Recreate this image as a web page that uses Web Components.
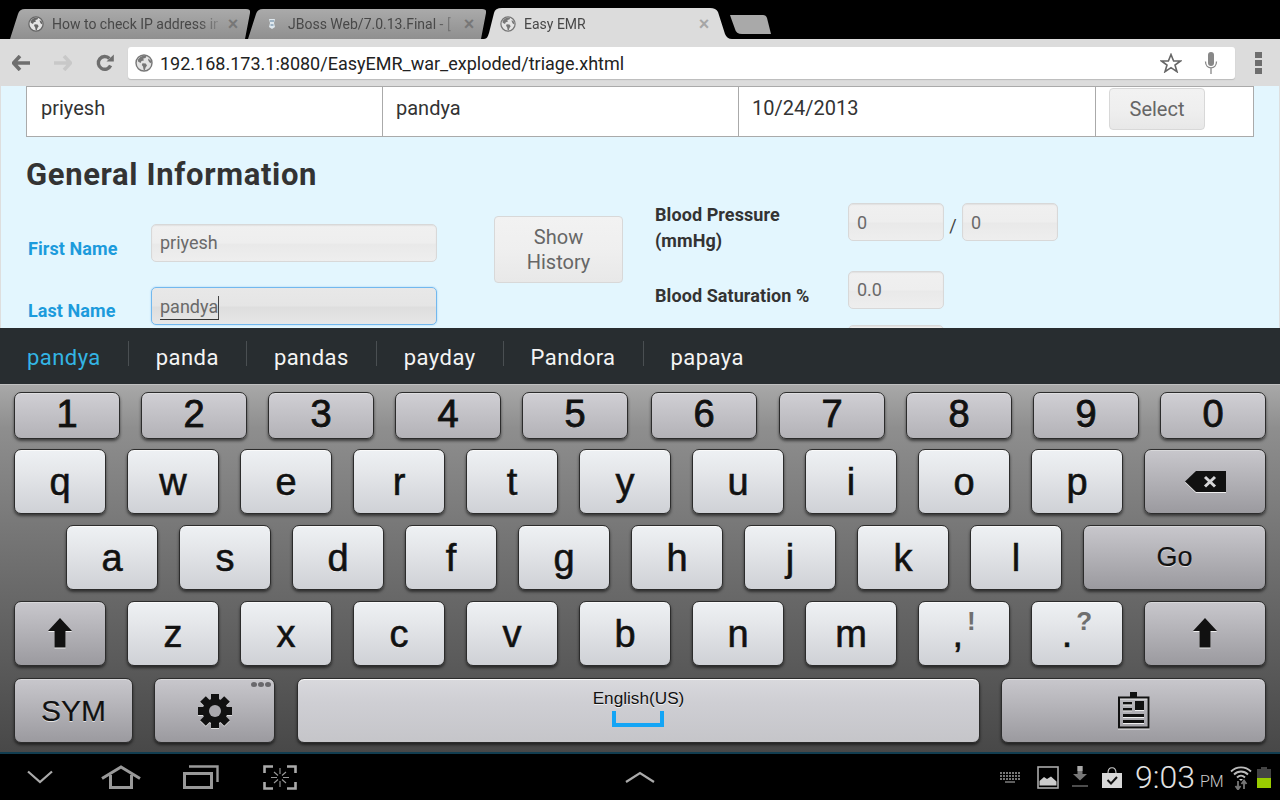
<!DOCTYPE html>
<html lang="en"><head><meta charset="utf-8"><title>Easy EMR</title>
<style>
html,body{margin:0;padding:0;background:#000;width:1280px;height:800px;overflow:hidden;font-family:Roboto,"Liberation Sans",sans-serif}
#app{display:flex;flex-direction:column;width:1280px;height:800px;overflow:hidden}
</style></head><body>
<div id="app">
<tab-strip></tab-strip>
<browser-toolbar url="192.168.173.1:8080/EasyEMR_war_exploded/triage.xhtml"></browser-toolbar>
<emr-page></emr-page>
<suggest-bar words="pandya,panda,pandas,payday,Pandora,papaya"></suggest-bar>
<soft-keyboard></soft-keyboard>
<system-bar></system-bar>
</div>
<script>
const GLOBE=(s,c='#777')=>`<svg width="${s}" height="${s}" viewBox="0 0 18 18" style="display:block;flex:none"><circle cx="9" cy="9" r="8" fill="#e4e4e4" stroke="${c}" stroke-width="1.4"/><path d="M3 5.5 5.5 2.7 9 1.6 11.5 2.2 10.5 4 8.3 4.6 8.8 6.5 6.5 7 5.6 9 3 7.5ZM7.5 9.3 10.7 9.6 12 11.5 10.6 13.5 9.8 16.3 8.6 15.8 8 12.6 6.8 11ZM13 4.5 15.8 6.5 16.4 9.5 14.6 8.6 13.4 6.8Z" fill="${c}"/></svg>`;
function def(name,css,render){
  customElements.define(name,class extends HTMLElement{
    connectedCallback(){
      if(this.shadowRoot)return;
      const r=this.attachShadow({mode:'open'});
      r.innerHTML=`<style>${css}</style>`+render(this);
    }
  });
}
def('browser-tab',`
:host{display:flex;align-items:center;position:relative;height:var(--h,30px);width:var(--w);margin-left:var(--ml,0);padding-left:var(--pl);padding-right:var(--pr);box-sizing:border-box;
 background:var(--bg);clip-path:var(--clip);color:#484848;font:14px Roboto,sans-serif;flex:none}
.ic{width:16px;flex:none;display:flex;justify-content:center}
.t{flex:1;margin-left:8px;white-space:nowrap;overflow:hidden;-webkit-mask-image:linear-gradient(90deg,#000 88%,rgba(0,0,0,.25));mask-image:linear-gradient(90deg,#000 88%,rgba(0,0,0,.25))}
.x{flex:none;width:14px;margin-left:8px;color:var(--xc,#777);font:bold 18px "Liberation Sans",sans-serif;text-align:center;line-height:30px}
`,h=>`<span class="ic"><slot name="icon"></slot></span><span class="t"><slot></slot></span><span class="x">×</span>`);
def('tab-strip',`
:host{display:flex;align-items:flex-end;height:39px;background:#000;padding-left:10px;box-sizing:border-box;flex:none}
.new{width:41px;height:19px;margin:0 0 5px -2px;background:#a9a9a9;flex:none;clip-path:path('M0 0H33Q36 0 37 3L41 19H12Q6 19 5 14L1 3Q0 0 0 0Z')}
`,h=>`
<browser-tab style="--w:240px;--pl:18px;--pr:10px;--bg:linear-gradient(#aaa,#8f8f8f);--clip:path('M0 30L8 5Q9.5 0 15 0H236Q241 0 240 4L235 30Z')"><span slot="icon">${GLOBE(16,'#666')}</span>How to check IP address in</browser-tab>
<browser-tab style="--w:238px;--ml:-2px;--pl:16px;--pr:10px;--bg:linear-gradient(#aaa,#8f8f8f);--clip:path('M0 30L8 5Q9.5 0 15 0H234Q239 0 238 4L233 30Z')"><svg slot="icon" width="8" height="12" viewBox="0 0 8 12" style="display:block"><path d="M1 1H7L6 5 7 9 4 11 1 9 2 5Z" fill="#dfe8ee"/><path d="M2 3H6M2.5 7H5.5" stroke="#5d7f9b"/></svg>JBoss Web/7.0.13.Final - [</browser-tab>
<browser-tab style="--w:248px;--h:31px;--ml:-2px;--pl:16px;--pr:21px;--bg:#dcdcdc;--xc:#a6a6a6;--clip:path('M0 31C3 31 4 28 5 25L10 5Q11 0 18 0H226Q232 0 234 4L241 26Q243 31 248 31Z')"><span slot="icon">${GLOBE(16,'#777')}</span>Easy EMR</browser-tab>
<div class="new"></div>`);
def('browser-toolbar',`
:host{display:flex;align-items:center;height:47px;background:#dcdcdc;flex:none;box-sizing:border-box;padding-left:12px;padding-top:1px}
svg{display:block;flex:none}
.omni{margin-left:14px;width:1107px;height:32px;background:#fff;border-radius:3px;box-shadow:0 1px 1px #bbb;display:flex;align-items:center;padding-left:7px;box-sizing:border-box;flex:none}
.u{margin-left:7px;font:18px Roboto,sans-serif;color:#222;flex:1;white-space:nowrap}
`,h=>`
<svg width="18" height="16" viewBox="0 0 18 16"><path d="M8 1 1.5 8 8 15M2 8H18" fill="none" stroke="#6e6e6e" stroke-width="3.6"/></svg>
<svg style="margin-left:24px" width="18" height="16" viewBox="0 0 18 16"><path d="M10 1 16.5 8 10 15M16 8H0" fill="none" stroke="#c8c8c8" stroke-width="3.6"/></svg>
<svg style="margin-left:24px" width="18" height="18" viewBox="0 0 18 18"><path d="M14.6 11.5A6.4 6.4 0 1 1 13.4 4.5" fill="none" stroke="#6e6e6e" stroke-width="3.4"/><path d="M10.5 7.5H17.8V0.5Z" fill="#6e6e6e"/></svg>
<div class="omni">${GLOBE(18,'#777')}<span class="u">${h.getAttribute('url')}</span>
<svg style="margin-right:22px" width="22" height="20" viewBox="0 0 22 20"><path d="M11 1.5 13.6 8H20.5L15 12 17 18.7 11 14.7 5 18.7 7 12 1.5 8H8.4Z" fill="none" stroke="#666" stroke-width="1.6"/></svg>
<svg style="margin-right:17px" width="14" height="24" viewBox="0 0 14 24"><rect x="4" y="1" width="6" height="14" rx="3" fill="#888"/><path d="M1.5 10.5C1.5 19 12.5 19 12.5 10.5M7 17V23" fill="none" stroke="#888" stroke-width="1.3"/></svg>
</div>
<svg style="margin-left:20px" width="7" height="22" viewBox="0 0 7 22"><rect y="0" width="7" height="6" fill="#6e6e6e"/><rect y="8" width="7" height="6" fill="#6e6e6e"/><rect y="16" width="7" height="6" fill="#6e6e6e"/></svg>`);
def('emr-button',`
:host{display:flex;align-items:center;justify-content:center;text-align:center;width:var(--w);height:var(--h);box-sizing:border-box;border:1px solid #d8d8d8;border-radius:4px;background:linear-gradient(#f2f2f2,#efefef 50%,#e8e8e8);color:#666;font:20px/25px Roboto,sans-serif}
`,h=>`<slot></slot>`);
def('patient-row',`
:host{display:grid;grid-template-columns:355px 356px 357px 1fr;height:51px;box-sizing:border-box;border:1px solid #aaa;background:#fff;flex:none;font:20px Roboto,sans-serif;color:#333;margin:0 25px}
.c{padding:9px 0 0 13px;border-left:1px solid #aaa;white-space:nowrap;line-height:24px}
.c.f{border-left:0;padding-left:14px}
.s{padding:1px 0 0 13px}
`,h=>`<div class="c f">priyesh</div><div class="c">pandya</div><div class="c">10/24/2013</div><div class="c s"><emr-button style="--w:96px;--h:42px">Select</emr-button></div>`);
def('emr-input',`
:host{display:block;flex:none;width:var(--w,96px);height:38px;box-sizing:border-box;border:1px solid #d8d8d8;border-radius:5px;padding:0 0 2px 8px;color:#6a6a6a;font:18px/36px Roboto,sans-serif;background:linear-gradient(#f0f0f0,#eeeeee 50%,#e9e9e9 53%,#eeeeee);white-space:nowrap;overflow:hidden;box-shadow:inset 0 1px 1px #e2e2e2}
:host([focused]){border-color:#72b8ee;box-shadow:0 0 2px #9ccdf2;background:linear-gradient(#e8e8e8,#e5e5e5 50%,#dedede 53%,#e6e6e6)}
.w{display:inline-block;position:relative}
:host([focused]) .w{border-right:1px solid #444;box-shadow:0 1px 0 #333;line-height:22px;height:23px;vertical-align:middle}
:host([nudge]) .w{top:1px}
`,h=>`<span class="w"><slot></slot></span>`);
def('emr-label',`
:host{display:block;flex:none;width:var(--lw);box-sizing:border-box;padding-top:var(--lt,0);font:bold 18px/26px Roboto,sans-serif;letter-spacing:.08px;color:var(--lc,#333);white-space:nowrap}
`,h=>`<slot></slot>`);
def('emr-field',`
:host{display:flex;align-items:flex-start;margin-top:var(--mt,0)}
`,h=>`<slot></slot>`);
def('emr-page',`
:host{display:flex;flex-direction:column;height:242px;overflow:hidden;background:#e3f6fe;box-sizing:border-box;flex:none;border-left:1px solid #dedede;border-right:1px solid #dedede}
h2{margin:18px 0 0 25px;height:40px;font:bold 31px/40px Roboto,sans-serif;letter-spacing:.65px;color:#333;flex:none}
.form{display:grid;grid-template-columns:467px 129px 1fr;margin:9px 0 0 26px}
.left{--lw:123px;--lc:#1c9bdc;padding-left:1px}
.btn{padding-top:12px}
.right{padding-left:32px;--lw:193px}
.sl{width:18px;text-align:center;font:18px/46px Roboto,sans-serif;color:#444;flex:none}
`,h=>`
<patient-row></patient-row>
<h2>General Information</h2>
<div class="form">
 <div class="left">
  <emr-field style="--mt:20px"><emr-label style="--lt:12px">First Name</emr-label><emr-input style="--w:286px">priyesh</emr-input></emr-field>
  <emr-field style="--mt:25px"><emr-label style="--lt:11px">Last Name</emr-label><emr-input style="--w:286px" focused>pandya</emr-input></emr-field>
 </div>
 <div class="btn"><emr-button style="--w:129px;--h:67px">Show<br>History</emr-button></div>
 <div class="right">
  <emr-field style="--mt:-3px"><emr-label style="--lt:1px">Blood Pressure<br>(mmHg)</emr-label><emr-input nudge style="margin-top:2px">0</emr-input><span class="sl" style="margin-top:2px">/</span><emr-input nudge style="margin-top:2px">0</emr-input></emr-field>
  <emr-field style="--mt:17px"><emr-label style="--lt:12px">Blood Saturation %</emr-label><emr-input>0.0</emr-input></emr-field>
  <emr-field style="--mt:16px"><emr-label></emr-label><emr-input></emr-input></emr-field>
 </div>
</div>`);
def('suggest-bar',`
:host{display:flex;align-items:center;height:56px;background:#282d30;flex:none;font:22px Roboto,sans-serif;color:#f4f4f4;box-sizing:border-box;padding-top:4px}
span{padding:0 27px 0 28px;position:relative;white-space:nowrap;letter-spacing:.45px;line-height:26px;height:26px}
span.a{color:#33b5e5;padding-left:27px}
span+span::before{content:"";position:absolute;left:0;top:-4px;height:25px;width:1px;background:#4a4f52}
`,h=>h.getAttribute('words').split(',').map((w,i)=>`<span class="${i?'':'a'}">${w}</span>`).join(''));
def('kb-key',`
:host{display:flex;align-items:center;justify-content:center;position:relative;flex:none;box-sizing:border-box;width:var(--w,92px);height:var(--h,65px);margin-left:var(--ml,0);border:1px solid #2c2c2c;border-radius:7px;
 background:linear-gradient(#eef1f4,#e6e8eb 30%,#cfd1d6);box-shadow:0 2px 3px rgba(0,0,0,.55),inset 0 1px 0 #fafafa;color:#111;font:var(--fs,38px)/1 "Liberation Sans",Arial,sans-serif;-webkit-text-stroke:var(--st,.6px) #111;text-shadow:0 1px 0 rgba(255,255,255,.7)}
:host([dark]){background:linear-gradient(#c8c7cc,#9b9a9f);box-shadow:0 2px 3px rgba(0,0,0,.55),inset 0 1px 0 #d8d8da}
:host([num]){background:linear-gradient(#d0cfd4,#b3b2b7);box-shadow:0 2px 3px rgba(0,0,0,.55),inset 0 1px 0 #dedee0;--st:.9px;padding-bottom:3px}
`,h=>`<slot></slot>`);
const keyRow=(cs)=>cs.map(c=>`<kb-key>${c}</kb-key>`).join('');
const UP=`<svg width="26" height="31" viewBox="0 0 26 31" style="display:block;filter:drop-shadow(0 1px 0 #eee)"><path d="M13 0 25 13H18.5V29.5H7.5V13H1Z" fill="#111"/></svg>`;
const GEAR=`<svg width="34" height="34" viewBox="0 0 34 34" style="display:block;filter:drop-shadow(0 1px 0 #ddd)"><g fill="#111">${[0,45,90,135].map(a=>`<rect x="13" y="0" width="8" height="34" transform="rotate(${a} 17 17)"/>`).join('')}<circle cx="17" cy="17" r="12.5"/></g><circle cx="17" cy="17" r="6" fill="#a9a8ad"/></svg>`;
const CLIP=`<svg width="32" height="37" viewBox="0 0 32 37" style="display:block;filter:drop-shadow(0 1px 0 #eee)"><path d="M1 5.5H30.5V35.5H1Z" fill="none" stroke="#111" stroke-width="2"/><rect x="12" y="0" width="7" height="6" fill="#111"/><rect x="17" y="9" width="9" height="9" fill="#111"/><rect x="5" y="10" width="9" height="2.4" fill="#111"/><rect x="5" y="16" width="9" height="2.4" fill="#111"/><rect x="5" y="22" width="21" height="3" fill="#111"/><rect x="5" y="28" width="21" height="3" fill="#111"/></svg>`;
const BKSP=`<svg width="41" height="22" viewBox="0 0 41 22" style="display:block;filter:drop-shadow(0 1px 0 #eee)"><path d="M11 0H41V21H11L0 10.5Z" fill="#111"/><path d="M20 6 30 15.5M30 6 20 15.5" stroke="#d6d6d8" stroke-width="3"/></svg>`;
def('soft-keyboard',`
:host{display:flex;flex-direction:column;height:368px;box-sizing:border-box;padding:8px 14px 0;flex:none;background:linear-gradient(#a9a9a9,#8e8e8e 12%,#6a6a6a 55%,#484848);box-shadow:inset 0 1px 0 #c0c0c0}
.r{display:flex;gap:21px;height:65px;flex:none;margin-top:11px}
.r.n{--h:47px;--w:106px;height:47px;margin-top:0;margin-bottom:-1px}
.r.five{margin-top:12px}
.sup{display:inline-block;color:#6f6f6f;-webkit-text-stroke:0;font:bold 26px/1 "Liberation Sans",sans-serif;margin:-26px 0 0 4px;vertical-align:top;text-shadow:none}
.sp{display:flex;flex-direction:column;align-items:center;font:17.2px/20px "Liberation Sans",sans-serif;color:#111;-webkit-text-stroke:0;padding-bottom:6px}
.br{width:52px;height:16px;margin-top:3px;box-sizing:border-box;border:4px solid #14a5f5;border-top:0}
.dots{position:absolute;right:3px;top:3px;display:flex;gap:1px}
.dots i{width:6px;height:5px;border-radius:50%;background:#69686c;display:block}
`,h=>`
<div class="r n">${[1,2,3,4,5].map(n=>`<kb-key num>${n}</kb-key>`).join('')}<kb-key num style="--ml:2px">6</kb-key><kb-key num style="--ml:1px">7</kb-key><kb-key num>8</kb-key><kb-key num>9</kb-key><kb-key num>0</kb-key></div>
<div class="r">${keyRow('qwertyuiop'.split(''))}<kb-key dark style="--w:122px">${BKSP}</kb-key></div>
<div class="r" style="padding-left:52px">${keyRow('asdfghjkl'.split(''))}<kb-key dark style="--w:183px;--fs:27px;--st:.2px">Go</kb-key></div>
<div class="r"><kb-key dark>${UP}</kb-key>${keyRow('zxcvbnm'.split(''))}<kb-key>,<span class="sup">!</span></kb-key><kb-key>.<span class="sup">?</span></kb-key><kb-key dark style="--w:122px">${UP}</kb-key></div>
<div class="r five"><kb-key dark style="--w:119px;--fs:30px;--st:.2px">SYM</kb-key><kb-key dark style="--w:121px">${GEAR}<div class="dots"><i></i><i></i><i></i></div></kb-key><kb-key style="--w:683px;--ml:1px;background:linear-gradient(#d9d9dd,#cfcfd4 35%,#c5c5c9)"><div class="sp">English(US)<div class="br"></div></div></kb-key><kb-key dark style="--w:265px">${CLIP}</kb-key></div>`);
def('system-bar',`
:host{display:grid;grid-template-columns:1fr auto 1fr;align-items:center;height:48px;background:#000;border-top:2px solid #123d50;box-sizing:border-box;flex:none;color:#ddd}
svg{display:block;flex:none}
.l,.rt{display:flex;align-items:center}
.l{padding-left:27px}
.rt{justify-content:flex-end;padding-right:9px}
.tm{font:300 32px/1 Roboto,sans-serif;margin-left:13px;color:#e2e2e2;white-space:nowrap}
.pm{font:300 16px/1 Roboto,sans-serif;margin:10px 0 0 5px;color:#ccc;width:22px;white-space:nowrap}
`,h=>`
<div class="l">
<svg width="26" height="14" viewBox="0 0 26 14"><path d="M1 1.5 13 12 25 1.5" fill="none" stroke="#aaa" stroke-width="2.2"/></svg>
<svg style="margin-left:48px" width="40" height="24" viewBox="0 0 40 24"><path d="M1 13.5 20 2 39 13.5M9.5 10V22.5H30.5V10" fill="none" stroke="#999" stroke-width="3"/></svg>
<svg style="margin-left:42px" width="36" height="24" viewBox="0 0 36 24"><path d="M6 1.5H34.5V17" fill="none" stroke="#999" stroke-width="2.4"/><rect x="1.5" y="8.5" width="27" height="14" fill="none" stroke="#999" stroke-width="3"/></svg>
<svg style="margin-left:44px" width="34" height="25" viewBox="0 0 34 25"><path d="M10 1.5H1.5V8M24 1.5H32.5V8M10 23.5H1.5V17M24 23.5H32.5V17" fill="none" stroke="#aaa" stroke-width="2.6"/><path d="M17 3V9M17 16V22M8 12.5H14M20 12.5H26M11 7 15 10.5M23 7 19 10.5M11 18 15 14.5M23 18 19 14.5" stroke="#999" stroke-width="1.1"/></svg>
</div>
<svg width="30" height="12" viewBox="0 0 30 12"><path d="M1 11 15 2 29 11" fill="none" stroke="#aaa" stroke-width="2.2"/></svg>
<div class="rt">
<svg width="20" height="11" viewBox="0 0 20 11"><path d="M0 1H20M0 4H20M0 7H20" stroke="#777" stroke-width="1.8" stroke-dasharray="2 1"/><path d="M5 10H15" stroke="#777" stroke-width="1.6"/></svg>
<svg style="margin-left:17px" width="22" height="23" viewBox="0 0 22 23"><rect x="1" y="1" width="20" height="21" fill="none" stroke="#aaa" stroke-width="1.6"/><path d="M2.5 19.5V15L7 11 10 13 14 10.5 19.5 15.5V19.5Z" fill="#ccc"/></svg>
<svg style="margin-left:13px" width="16" height="22" viewBox="0 0 16 22"><path d="M5.5 0H10.500V8H15L8 14.500 1 8H5.5Z" fill="#777"/><path d="M5.500 0H10.500V5H5.500Z" fill="#aaa"/><path d="M0 20H16" stroke="#555" stroke-width="1.800"/></svg>
<svg style="margin-left:14px" width="20" height="21" viewBox="0 0 20 21"><path d="M0 6H20V21H0Z" fill="#d8d8d8"/><path d="M6 6C6 -1 14 -1 14 6" fill="none" stroke="#ccc" stroke-width="1.100"/><path d="M5.500 13 9 16.500 15 10" fill="none" stroke="#111" stroke-width="2"/></svg>
<span class="tm">9:03</span><span class="pm">PM</span>
<svg style="margin-left:8px" width="22" height="25" viewBox="0 0 22 25"><path d="M1 6.500C6.500 1 15.500 1 21 6.500M4 9.500C8 5.500 14 5.500 18 9.500M7 12.500C9.500 10 12.500 10 15 12.500" fill="none" stroke="#bbb" stroke-width="1.800"/><path d="M9 14 11 16 13 14Z" fill="#ccc"/><path d="M8 16V24M5.500 21 8 24.500 10.500 21M14 24V16M11.500 19 14 15.500 16.500 19" fill="none" stroke="#777" stroke-width="1.800"/></svg>
<svg style="margin-left:5px" width="14" height="21" viewBox="0 0 14 21"><path d="M4 0H10V2H14V11H0V2H4Z" fill="#444"/><rect y="11" width="14" height="10" fill="#99cc00"/></svg>
</div>`);
</script>
</body></html>
